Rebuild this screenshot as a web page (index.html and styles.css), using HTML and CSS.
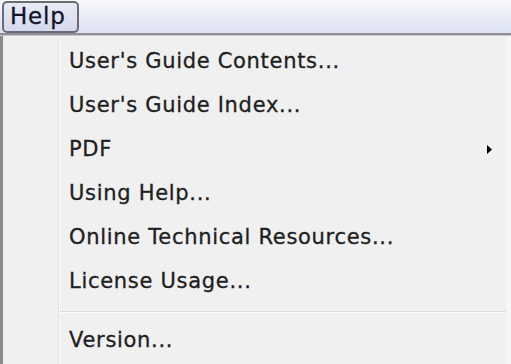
FILE: index.html
```html
<!DOCTYPE html>
<html lang="en">
  <head>
    <meta charset="UTF-8" />
    <title>Help Menu</title>
    <link rel="stylesheet" href="styles.css">
  </head>
  <body>
    <div class="menubar">
      <span class="menubar__item">Help</span>
    </div>
    <div class="menu">
      <div class="menu__gutter"></div>
      <ul class="menu__list">
        <li class="menu__item">User's Guide Contents...</li>
        <li class="menu__item">User's Guide Index...</li>
        <li class="menu__item menu__item--sub">PDF
          <svg class="menu__arrow" width="5" height="9" viewBox="0 0 5 9"><path d="M0 0 L5 4.5 L0 9 Z" fill="#000"/></svg>
        </li>
        <li class="menu__item">Using Help...</li>
        <li class="menu__item">Online Technical Resources...</li>
        <li class="menu__item">License Usage...</li>
        <li class="menu__sep"></li>
        <li class="menu__item">Version...</li>
      </ul>
    </div>
  </body>
</html>
```

FILE: styles.css
```css
* {
  box-sizing: border-box;
}

body {
  margin: 0;
  width: 511px;
  height: 364px;
  overflow: hidden;
  background: #f0f0f0;
  font-family: "DejaVu Sans", sans-serif;
  font-size: 21px;
  letter-spacing: 0.7px;
  color: #202020;
  -webkit-text-stroke: 0.3px #202020;
}

.menubar {
  height: 35px;
  padding: 1px 2px 0;
  background: linear-gradient(#f7f8fc, #dde2f3);
  border-bottom: 2px solid #8e8e96;
  box-shadow: 0 1px 0 #c8c8c8;
}

.menubar__item {
  display: inline-block;
  width: 77px;
  height: 32px;
  padding-left: 6px;
  font-size: 23px;
  letter-spacing: 0.8px;
  line-height: 27px;
  background: linear-gradient(#e8ebf6, #d4d9ee);
  border: 2px solid #6c6c72;
  border-radius: 5px;
  color: #15152a;
  -webkit-text-stroke: 0.3px #15152a;
}

.menu {
  display: flex;
  height: 328px;
  margin-top: 1px;
  border-left: 3px solid #8a8a8a;
  border-right: 5px solid #f6f6f6;
}

.menu__gutter {
  width: 56px;
  flex-shrink: 0;
  border-right: 1px solid #e0e0e0;
  box-shadow: 1px 0 0 #fafafa;
}

.menu__list {
  flex: 1;
  list-style: none;
  margin: 0;
  padding: 3px 0 0;
}

.menu__item {
  display: flex;
  align-items: center;
  height: 44px;
  padding-left: 10px;
}

.menu__item--sub {
  justify-content: space-between;
  padding-right: 14px;
}

.menu__sep {
  height: 2px;
  margin: 8px 0 5px 1px;
  border-top: 1px solid #dcdcdc;
  border-bottom: 1px solid #fcfcfc;
}
```
